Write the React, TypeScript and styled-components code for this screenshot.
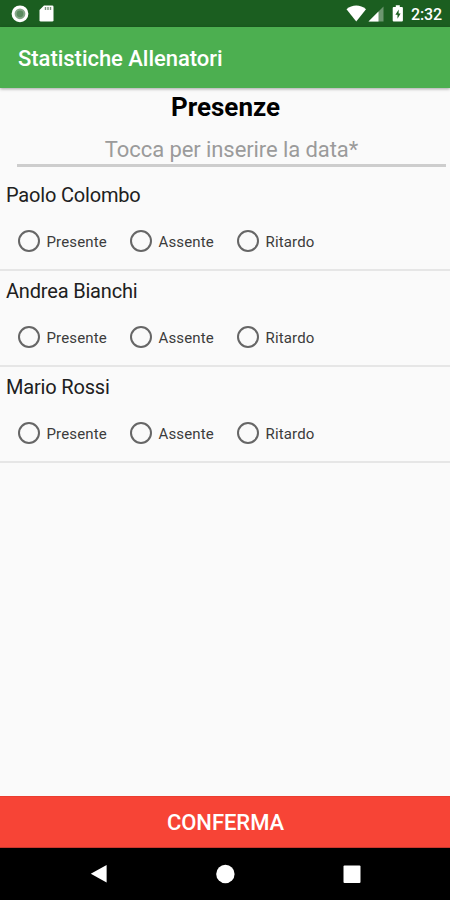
import React from 'react';
import styled, { createGlobalStyle } from 'styled-components';

const GlobalStyle = createGlobalStyle`
  *, *::before, *::after { box-sizing: border-box; }
  body { margin: 0; background: #fafafa; font-family: Roboto, sans-serif; }
`;

const Screen = styled.div`
  display: flex;
  flex-direction: column;
  width: 450px;
  height: 900px;
  overflow: hidden;
  background: #fafafa;
`;

const StatusBar = styled.header`
  display: flex;
  flex: none;
  justify-content: space-between;
  height: 27px;
  background: #1b5e20;
`;

const StatusGroup = styled.div`
  display: flex;
  align-items: center;
`;

const Clock = styled.span`
  width: 39px;
  margin-left: 6px;
  padding-top: 1px;
  color: #fff;
  font-size: 16px;
  font-weight: 500;
  line-height: 27px;
  letter-spacing: -0.1px;
`;

const AppBar = styled.div`
  display: flex;
  flex: none;
  align-items: center;
  height: 61px;
  padding: 2px 0 0 18px;
  background: #4caf50;
  box-shadow: 0 1px 3px rgba(0, 0, 0, 0.35);
`;

const AppTitle = styled.h1`
  margin: 0;
  color: #fff;
  font-size: 22px;
  font-weight: 500;
  line-height: 30px;
  letter-spacing: -0.03px;
`;

const Content = styled.main`
  display: flex;
  flex: 1;
  flex-direction: column;
`;

const Heading = styled.h2`
  margin: 3px 0 0 1px;
  color: #000;
  font-size: 26px;
  font-weight: 700;
  line-height: 32px;
  text-align: center;
`;

const DateInput = styled.input`
  height: 38px;
  margin: 6px 4px 0 17px;
  padding: 6px 0 0;
  border: 0;
  border-bottom: 3px solid #cdcdcd;
  outline: 0;
  background: transparent;
  font-family: inherit;
  font-size: 22px;
  letter-spacing: -0.08px;
  text-align: center;

  &::placeholder {
    color: #9b9b9b;
    opacity: 1;
  }
`;

const TrainerList = styled.ul`
  margin: 8px 0 0;
  padding: 0;
  list-style: none;
`;

const TrainerRow = styled.li`
  height: 96px;
  padding: 6px 0 0 6px;
  border-bottom: 2px solid #e6e6e6;
`;

const TrainerName = styled.div`
  color: #202020;
  font-size: 20px;
  line-height: 28px;
  letter-spacing: -0.18px;
`;

const Options = styled.div`
  display: flex;
  height: 24px;
  margin: 20px 0 0 11px;
`;

const Option = styled.label<{ $width: number }>`
  display: flex;
  align-items: center;
  width: ${({ $width }) => $width}px;
  color: #3c3c3c;
  font-size: 15px;
  line-height: 24px;
  letter-spacing: 0.15px;
`;

const OptionText = styled.span`
  padding: 2px 0 0 0.5px;
`;

const Radio = styled.input`
  appearance: none;
  flex: none;
  width: 22px;
  height: 22px;
  margin: 0 6px 0 1px;
  border: 2px solid #666;
  border-radius: 50%;

  &:checked {
    border-color: #4caf50;
    background: radial-gradient(circle, #4caf50 45%, transparent 50%);
  }
`;

const ConfirmButton = styled.button`
  flex: none;
  height: 52px;
  padding: 0 0 0 1px;
  border: 0;
  border-top: 1px solid #ea3d30;
  border-bottom: 1px solid #c7372d;
  background: #f74436;
  color: #fff;
  font-family: inherit;
  font-size: 22px;
  font-weight: 500;
  letter-spacing: -0.05px;
`;

const NavBar = styled.nav`
  display: flex;
  flex: none;
  align-items: center;
  justify-content: space-between;
  height: 52px;
  padding: 0 88px 0 89px;
  background: #000;
`;

const options = [
  { label: 'Presente', width: 112 },
  { label: 'Assente', width: 107 },
  { label: 'Ritardo', width: 90 },
];

const trainers = ['Paolo Colombo', 'Andrea Bianchi', 'Mario Rossi'];

export default function App() {
  return (
    <>
      <GlobalStyle />
      <Screen>
        <StatusBar>
          <StatusGroup>
            <svg width="60" height="27" fill="none">
              <circle cx="20" cy="13.8" r="6.9" fill="#86a889" stroke="#fff" strokeWidth="3" />
              <circle cx="20" cy="13.8" r="3.4" fill="#5b8b60" />
              <path d="M44 5.5h8.2q1.3 0 1.3 1.3v13.4q0 1.3-1.3 1.3H40.8q-1.3 0-1.3-1.3V10z" fill="#fff" />
              <path d="M45.5 7v3M48 7v3M50.5 7v3" stroke="#78927b" strokeWidth="1.4" />
            </svg>
          </StatusGroup>
          <StatusGroup>
            <svg width="60" height="27">
              <path d="M1.5 9.2C7.1 4.4 15.4 4.4 21 9.2L11.25 21.5z" fill="#fff" />
              <path d="M38.5 6.5v15h-15z" fill="#6c966f" />
              <path d="M33.5 11.5v10h-10z" fill="#fff" />
              <path d="M50.8 7V5.2h4V7h2.1q1 0 1 1v12.5q0 1-1 1h-8.2q-1 0-1-1V8q0-1 1-1z" fill="#fff" />
              <path d="M53.7 9.5l-3.3 5.3h2.1v4l3.1-5.4h-2z" fill="#1b5e20" />
            </svg>
            <Clock>2:32</Clock>
          </StatusGroup>
        </StatusBar>
        <AppBar>
          <AppTitle>Statistiche Allenatori</AppTitle>
        </AppBar>
        <Content>
          <Heading>Presenze</Heading>
          <DateInput placeholder="Tocca per inserire la data*" readOnly />
          <TrainerList>
            {trainers.map((name) => (
              <TrainerRow key={name}>
                <TrainerName>{name}</TrainerName>
                <Options>
                  {options.map(({ label, width }) => (
                    <Option key={label} $width={width}>
                      <Radio type="radio" name={name} />
                      <OptionText>{label}</OptionText>
                    </Option>
                  ))}
                </Options>
              </TrainerRow>
            ))}
          </TrainerList>
        </Content>
        <ConfirmButton>CONFERMA</ConfirmButton>
        <NavBar>
          <svg width="20" height="20" aria-label="Back">
            <path d="M17.6 1v17.5L1.8 9.8z" fill="#fff" />
          </svg>
          <svg width="20" height="20" aria-label="Home">
            <circle cx="9.4" cy="10" r="9.2" fill="#fff" />
          </svg>
          <svg width="20" height="20" aria-label="Recent apps">
            <rect x="1.5" y="1.5" width="17" height="17.5" rx="1" fill="#fff" />
          </svg>
        </NavBar>
      </Screen>
    </>
  );
}
